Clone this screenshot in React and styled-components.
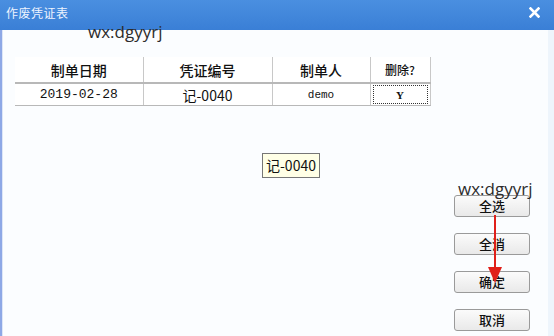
import React from "react";
import styled, { createGlobalStyle } from "styled-components";

const Global = createGlobalStyle`
  html, body { margin: 0; padding: 0; width: 554px; height: 336px; overflow: hidden; background: #fbfdff; }
  #root { width: 554px; height: 336px; }
`;

const Window = styled.div`
  position: relative;
  width: 554px;
  height: 336px;
  display: flex;
  flex-direction: column;
  font-family: "Noto Sans CJK SC", "Noto Sans", sans-serif;
  overflow: hidden;
`;

const TitleBar = styled.div`
  height: 30px;
  flex: none;
  background: linear-gradient(#4a8fe0, #3a7fd6);
  display: flex;
  align-items: center;
  justify-content: space-between;
  padding: 0 14px 0 6px;
  color: #fff;
  font-size: 12px;
`;

const Title = styled.span`
  color: #eef4ff;
  letter-spacing: 0.5px;
  margin-top: -5px;
`;

const Close = styled.svg`
  width: 11px;
  height: 11px;
  margin-top: -5px;
`;

const Body = styled.div`
  flex: 1;
  display: flex;
  border-left: 2px solid #8ea8e6;
  background: #fbfdff;
  position: relative;
`;

const Inner = styled.div`
  flex: 1;
  display: flex;
  border-left: 1px solid #dde6f7;
  border-right: 6px solid #eef5fc;
`;

const Left = styled.div`
  flex: 1;
  padding: 27px 0 0 12px;
`;

const Table = styled.table`
  border-collapse: collapse;
  width: 415px;
  table-layout: fixed;
  background: #fff;
`;

const Th = styled.th`
  font-weight: 500;
  font-size: ${(p) => (p.$small ? "12px" : "14px")};
  color: #111;
  height: 25px;
  padding: 0;
  border-bottom: 2px solid #b8b8b8;
  border-left: ${(p) => (p.$first ? "none" : "1px solid #c8c8c8")};
  border-right: ${(p) => (p.$last ? "1px solid #c8c8c8" : "none")};
`;

const Td = styled.td`
  font-family: ${(p) => (p.$mono ? '"Liberation Mono", "Noto Sans CJK SC", monospace' : '"Noto Sans CJK SC", sans-serif')};
  font-size: ${(p) => (p.$mono ? "13px" : "14px")};
  color: #111;
  text-align: center;
  height: 21px;
  padding: 0;
  border-bottom: 1px solid #b8b8b8;
  border-left: ${(p) => (p.$first ? "none" : "1px solid #c8c8c8")};
  border-right: ${(p) => (p.$last ? "1px solid #c8c8c8" : "none")};
`;

const Small = styled.span`
  font-size: 11px;
`;

const Focus = styled.div`
  margin: 1px 2px;
  height: 17px;
  border: 1px dotted #333;
  display: flex;
  align-items: center;
  justify-content: center;
  font-family: "Liberation Serif", serif;
  font-weight: bold;
  font-size: 11px;
`;

const Tooltip = styled.div`
  position: absolute;
  left: 260px;
  top: 123px;
  padding: 2px 3px;
  background: #ffffe6;
  border: 1px solid #767676;
  font-size: 14px;
  color: #111;
  line-height: 19px;
`;

const Right = styled.div`
  width: 94px;
  display: flex;
  flex-direction: column;
  align-items: flex-start;
  padding-top: 165px;
  gap: 16px;
`;

const Button = styled.button`
  width: 76px;
  height: 22px;
  border: 1px solid #9a9a9a;
  border-radius: 3px;
  background: linear-gradient(#fbfbfb, #e9e9e9);
  font-family: "Noto Sans CJK SC", sans-serif;
  font-size: 13px;
  font-weight: 500;
  color: #111;
  padding: 0;
  line-height: 18px;
`;

const Watermark = styled.div`
  position: absolute;
  left: ${(p) => p.$x}px;
  top: ${(p) => p.$y}px;
  font-family: "Open Sans", "Noto Sans", sans-serif;
  font-size: 17px;
  color: #2c2c2c;
  pointer-events: none;
`;

const Arrow = styled.svg`
  position: absolute;
  left: 486px;
  top: 215px;
  width: 18px;
  height: 70px;
`;

export default function App() {
  return (
    <>
      <Global />
      <Window>
        <TitleBar>
          <Title>作废凭证表</Title>
          <Close viewBox="0 0 11 11">
            <path d="M1.5 1.5 L9.5 9.5 M9.5 1.5 L1.5 9.5" stroke="#fff" strokeWidth="2.6" strokeLinecap="square" />
          </Close>
        </TitleBar>
        <Body>
          <Inner>
            <Left>
              <Table>
                <colgroup>
                  <col style={{ width: 128 }} />
                  <col style={{ width: 129 }} />
                  <col style={{ width: 98 }} />
                  <col style={{ width: 60 }} />
                </colgroup>
                <thead>
                  <tr>
                    <Th $first>制单日期</Th>
                    <Th>凭证编号</Th>
                    <Th>制单人</Th>
                    <Th $last $small>删除?</Th>
                  </tr>
                </thead>
                <tbody>
                  <tr>
                    <Td $first $mono>2019-02-28</Td>
                    <Td>记-0040</Td>
                    <Td $mono><Small>demo</Small></Td>
                    <Td $last>
                      <Focus>Y</Focus>
                    </Td>
                  </tr>
                </tbody>
              </Table>
            </Left>
            <Right>
              <Button>全选</Button>
              <Button>全消</Button>
              <Button>确定</Button>
              <Button>取消</Button>
            </Right>
          </Inner>
          <Tooltip>记-0040</Tooltip>
        </Body>
        <Watermark $x={88} $y={20}>wx:dgyyrj</Watermark>
        <Watermark $x={458} $y={177}>wx:dgyyrj</Watermark>
        <Arrow viewBox="0 0 18 70">
          <line x1="9" y1="0" x2="9" y2="56" stroke="#e0201a" strokeWidth="2" />
          <polygon points="2,52 16,52 9,68" fill="#e0201a" />
        </Arrow>
      </Window>
    </>
  );
}
